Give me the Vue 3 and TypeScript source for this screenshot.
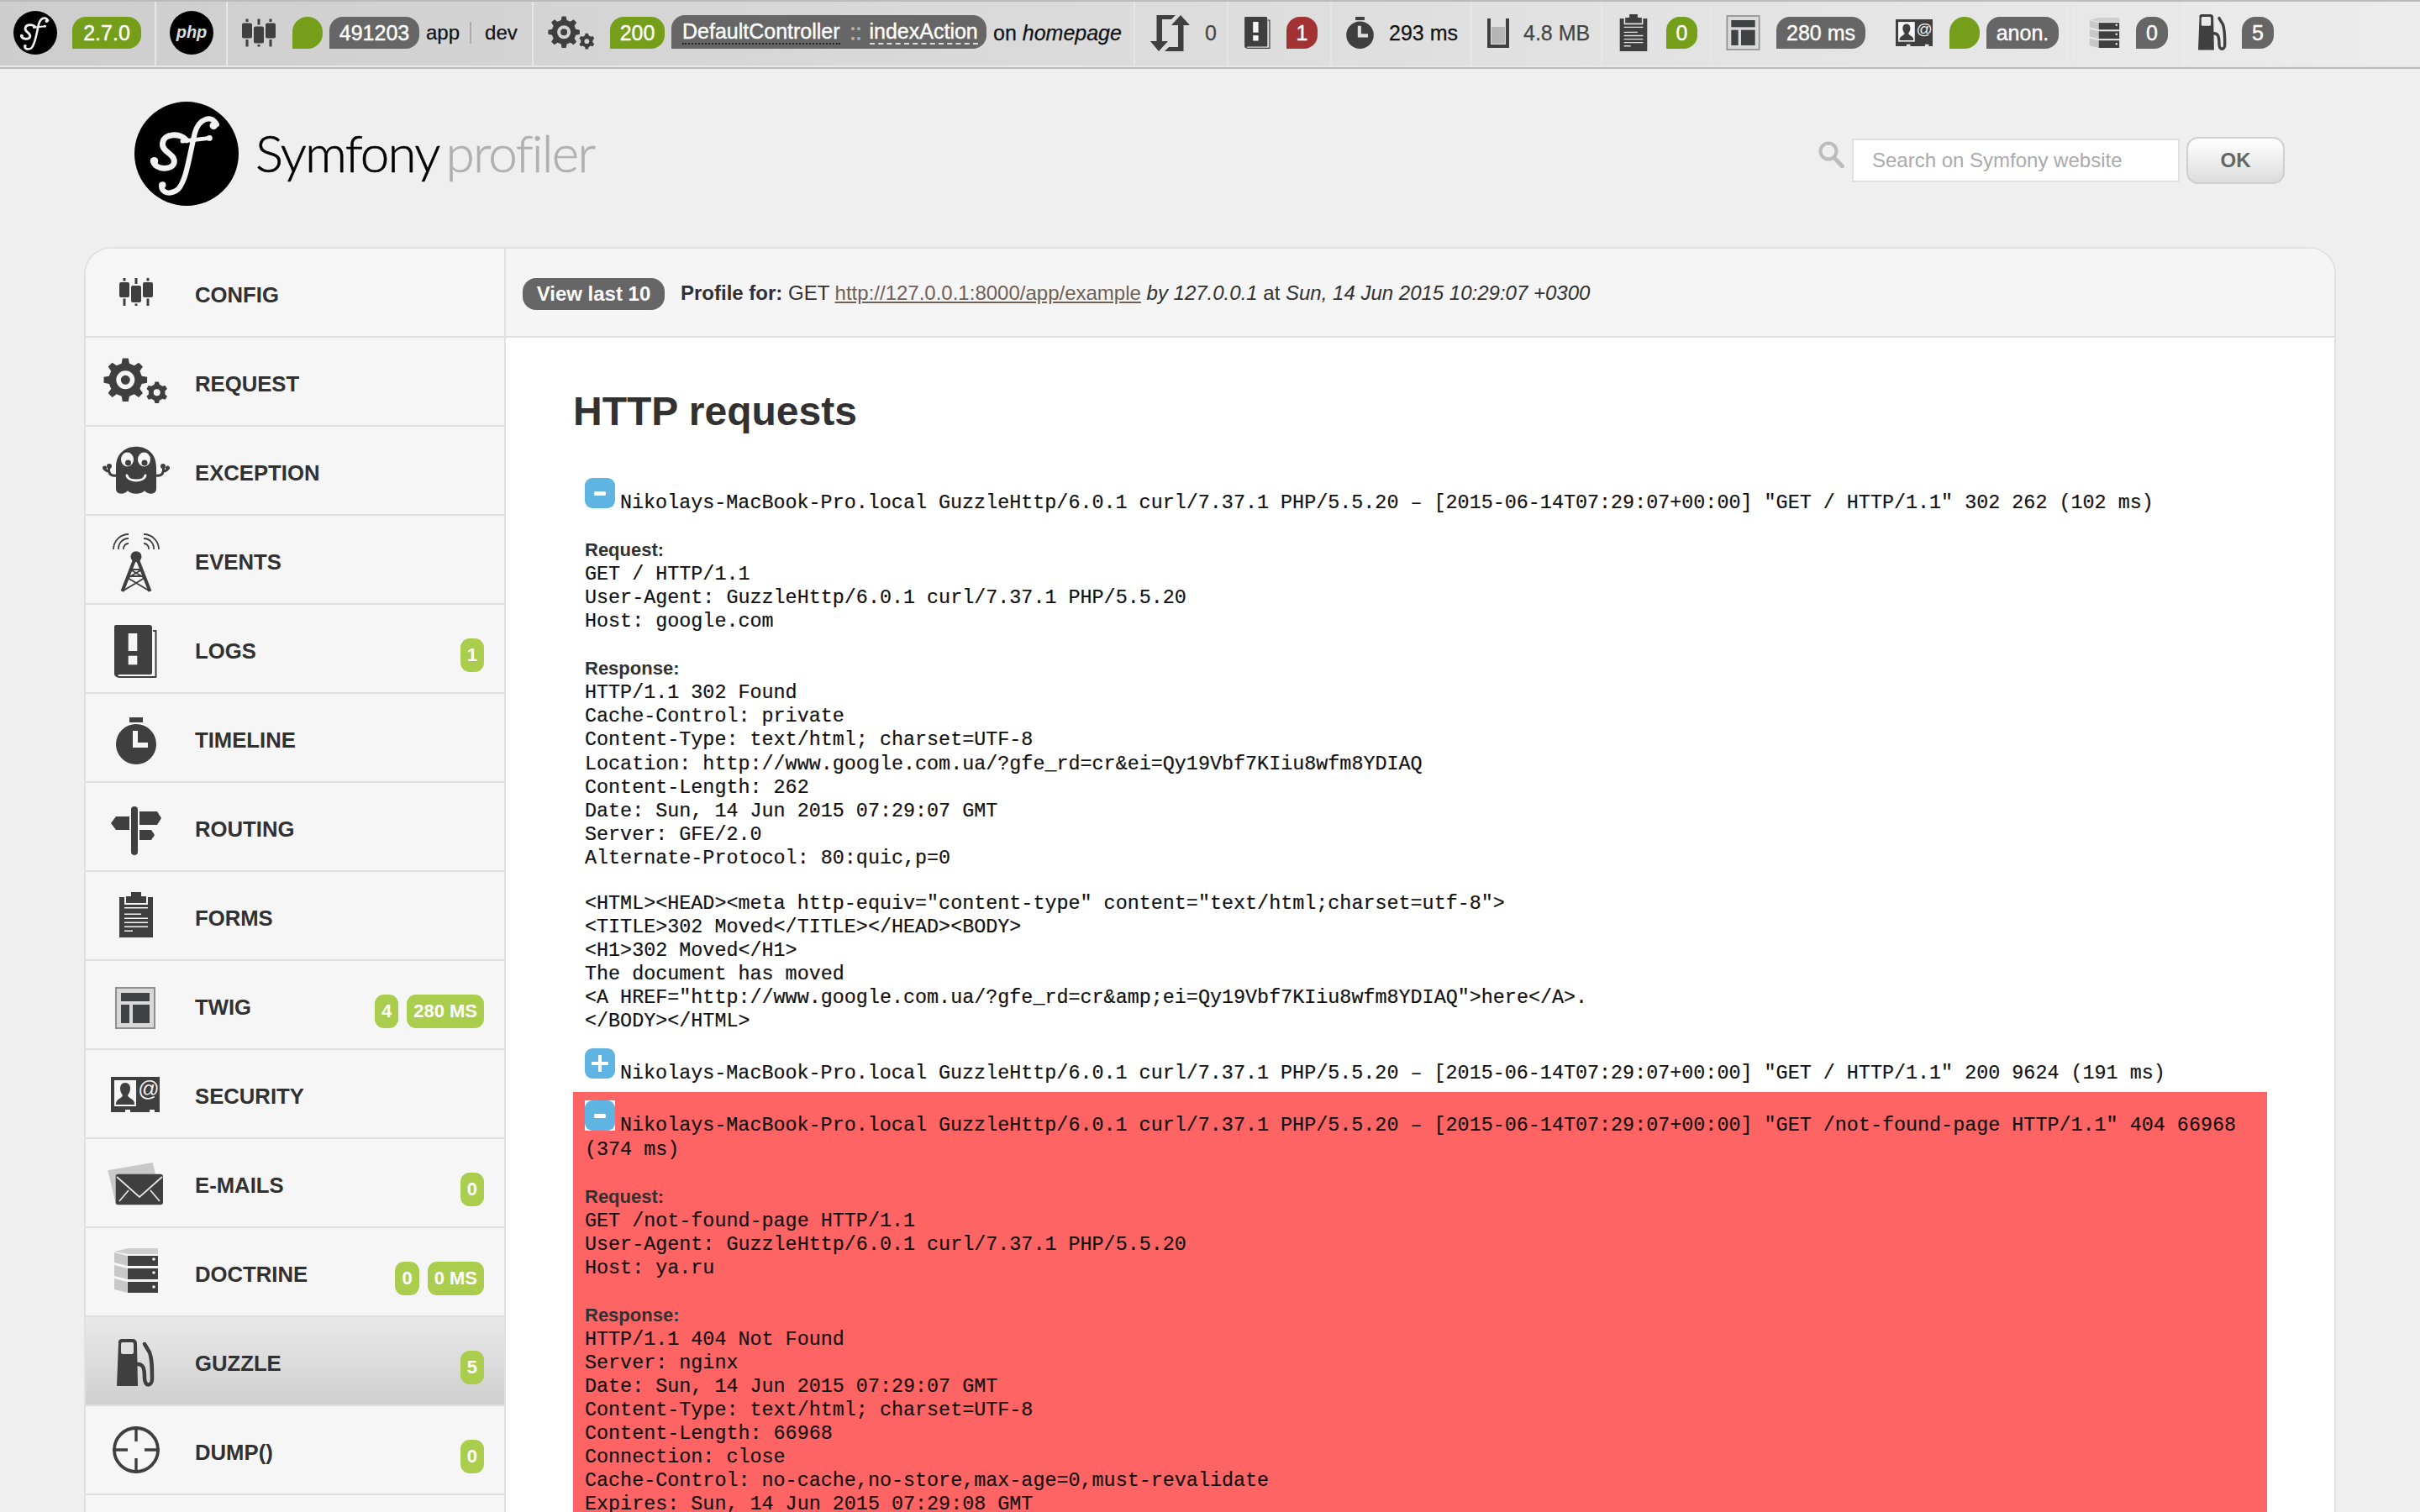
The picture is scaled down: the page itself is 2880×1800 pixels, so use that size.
<script setup lang="ts">
import { h } from 'vue'
import type { FunctionalComponent } from 'vue'

type IconName =
  | 'config' | 'gears' | 'ghost' | 'tower' | 'logs' | 'timer' | 'routing' | 'forms'
  | 'twig' | 'security' | 'mail' | 'doctrine' | 'guzzle' | 'dump' | 'redirect' | 'memory'

const viewBoxes: Record<IconName, [number, number, number, number]> = {
  config: [20, 23, 40, 33],
  gears: [1, 12, 77, 56],
  ghost: [0, 11, 80, 58],
  tower: [12, 10, 56, 70],
  logs: [14, 12, 51, 63],
  timer: [16, 16, 48, 56],
  routing: [10, 16, 60, 58],
  forms: [20, 12, 40, 54],
  twig: [16, 20, 46, 48],
  security: [10, 20, 58, 42],
  mail: [6, 16, 66, 51],
  doctrine: [14, 12, 52, 53],
  guzzle: [17, 14, 45, 58],
  dump: [12, 12, 56, 56],
  redirect: [0, 0, 47, 44],
  memory: [0, 0, 26, 35],
}

const Ic: FunctionalComponent<{ name: IconName; w?: number; hgt?: number }> = (props) => {
  const vb = viewBoxes[props.name]
  const width = props.w ?? 80
  const isBar = props.w !== undefined
  return h(
    'svg',
    {
      width,
      height: isBar ? props.hgt : 80,
      viewBox: isBar ? vb.join(' ') : '0 0 80 80',
      style: { flex: 'none', display: 'block', overflow: 'visible' },
    },
    [h('use', { href: '#i-' + props.name })],
  )
}

function gear(cx: number, cy: number, ro: number, ri: number, teeth: number, hole: number, dot: number): string {
  const pts: string[] = []
  const step = (Math.PI * 2) / teeth
  for (let i = 0; i < teeth; i++) {
    const a = i * step - Math.PI / 2
    const seq: [number, number][] = [
      [ri, a - step * 0.3],
      [ro, a - step * 0.17],
      [ro, a + step * 0.17],
      [ri, a + step * 0.3],
    ]
    for (const [r, t] of seq) {
      pts.push((cx + r * Math.cos(t)).toFixed(2) + ' ' + (cy + r * Math.sin(t)).toFixed(2))
    }
  }
  const ring = (r: number) =>
    `M${cx - r} ${cy}a${r} ${r} 0 1 0 ${2 * r} 0a${r} ${r} 0 1 0 ${-2 * r} 0Z`
  return 'M' + pts.join('L') + 'Z' + ring(hole) + (dot ? ring(dot) : '')
}

const bigGear = gear(27.3, 38.3, 26, 20, 8, 11, 5.5)
const smallGear = gear(64.7, 53.3, 13, 10, 6, 4, 0)

interface MenuItem {
  label: string
  icon: IconName
  badges: string[]
  active?: boolean
}

const menu: MenuItem[] = [
  { label: 'Config', icon: 'config', badges: [] },
  { label: 'Request', icon: 'gears', badges: [] },
  { label: 'Exception', icon: 'ghost', badges: [] },
  { label: 'Events', icon: 'tower', badges: [] },
  { label: 'Logs', icon: 'logs', badges: ['1'] },
  { label: 'Timeline', icon: 'timer', badges: [] },
  { label: 'Routing', icon: 'routing', badges: [] },
  { label: 'Forms', icon: 'forms', badges: [] },
  { label: 'Twig', icon: 'twig', badges: ['4', '280 ms'] },
  { label: 'Security', icon: 'security', badges: [] },
  { label: 'E-mails', icon: 'mail', badges: ['0'] },
  { label: 'Doctrine', icon: 'doctrine', badges: ['0', '0 ms'] },
  { label: 'Guzzle', icon: 'guzzle', badges: ['5'], active: true },
  { label: 'Dump()', icon: 'dump', badges: ['0'] },
  { label: '', icon: 'dump', badges: [] },
]

const agent = 'Nikolays-MacBook-Pro.local GuzzleHttp/6.0.1 curl/7.37.1 PHP/5.5.20 – [2015-06-14T07:29:07+00:00]'

const first = {
  req: 'GET / HTTP/1.1\nUser-Agent: GuzzleHttp/6.0.1 curl/7.37.1 PHP/5.5.20\nHost: google.com',
  res: 'HTTP/1.1 302 Found\nCache-Control: private\nContent-Type: text/html; charset=UTF-8\nLocation: http://www.google.com.ua/?gfe_rd=cr&ei=Qy19Vbf7KIiu8wfm8YDIAQ\nContent-Length: 262\nDate: Sun, 14 Jun 2015 07:29:07 GMT\nServer: GFE/2.0\nAlternate-Protocol: 80:quic,p=0',
  body: '<HTML><HEAD><meta http-equiv="content-type" content="text/html;charset=utf-8">\n<TITLE>302 Moved</TITLE></HEAD><BODY>\n<H1>302 Moved</H1>\nThe document has moved\n<A HREF="http://www.google.com.ua/?gfe_rd=cr&amp;ei=Qy19Vbf7KIiu8wfm8YDIAQ">here</A>.\n</BODY></HTML>',
}
const third = {
  req: 'GET /not-found-page HTTP/1.1\nUser-Agent: GuzzleHttp/6.0.1 curl/7.37.1 PHP/5.5.20\nHost: ya.ru',
  res: 'HTTP/1.1 404 Not Found\nServer: nginx\nDate: Sun, 14 Jun 2015 07:29:07 GMT\nContent-Type: text/html; charset=UTF-8\nContent-Length: 66968\nConnection: close\nCache-Control: no-cache,no-store,max-age=0,must-revalidate\nExpires: Sun, 14 Jun 2015 07:29:08 GMT',
}
</script>

<template>
  <div class="page">
    <svg class="defs" width="0" height="0" aria-hidden="true">
      <defs>
        <g id="sf-mark">
          <circle cx="50" cy="50" r="50" fill="#000" />
          <g fill="none" stroke="#f2f2f2" stroke-linecap="round">
            <path stroke-width="5" d="M79 22C74 12 62 16 58 30 52 55 50 75 42 84 35 90 25 88 26 80" />
            <path stroke-width="5.500" d="M50 37C44 30 28 30 27 40 26 49 40 50 38 59 36 66 20 66 18 57" />
            <path stroke-width="4" d="M46 38 72 35" />
          </g>
          <g fill="#f2f2f2">
            <circle cx="76" cy="23" r="3.800" />
            <circle cx="19" cy="57" r="3.800" />
            <circle cx="27" cy="80" r="3.200" />
            <circle cx="72" cy="35" r="2.800" />
          </g>
        </g>
        <g id="i-config" fill="#3f3f3f">
          <rect x="20" y="28" width="12" height="18" rx="2" />
          <rect x="34" y="32" width="12" height="20" rx="2" />
          <rect x="48" y="28" width="12" height="18" rx="2" />
          <rect x="24.5" y="23" width="3" height="3.5" />
          <rect x="38.5" y="23" width="3" height="7" />
          <rect x="52.5" y="23" width="3" height="3.5" />
          <rect x="24.5" y="47.5" width="3" height="8.5" />
          <rect x="38.5" y="53.5" width="3" height="2.5" />
          <rect x="52.5" y="47.5" width="3" height="8.5" />
        </g>
        <g id="i-gears" fill="#3f3f3f" fill-rule="evenodd">
          <path :d="bigGear" />
          <path :d="smallGear" />
        </g>
        <g id="i-ghost">
          <path fill="#3f3f3f" d="M16 36C16 20 27 11.700 40 11.700S64 20 64 36V62c0 3.500-2.500 5.700-6 5.700-3.500 0-6-1.200-8-3.500-2.300 2.300-5 3.500-10 3.500s-7.700-1.200-10-3.500c-2 2.300-4.500 3.500-8 3.500-3.500 0-6-2.200-6-5.700Z" />
          <ellipse cx="29.500" cy="27" rx="7.500" ry="8.500" fill="#f6f6f6" />
          <ellipse cx="49.500" cy="27" rx="7.500" ry="8.500" fill="#f6f6f6" />
          <circle cx="30.500" cy="31" r="3.500" fill="#3f3f3f" />
          <circle cx="50" cy="31" r="3.500" fill="#3f3f3f" />
          <path d="M29 46c2 8 20 8 22 0" fill="none" stroke="#f6f6f6" stroke-width="3" stroke-linecap="round" />
          <g fill="none" stroke="#3f3f3f" stroke-width="3">
            <path d="M16 46c-5 1-9-1-8.500-9M7.500 41c-2 0-4-1-5-3" />
            <path d="M64 46c5 1 9-1 8.500-9M72.500 41c2 0 4-1 5-3" />
          </g>
          <g fill="#3f3f3f">
            <circle cx="8" cy="35" r="3" />
            <circle cx="2.500" cy="37" r="2.500" />
            <circle cx="72" cy="35" r="3" />
            <circle cx="77.500" cy="37" r="2.500" />
          </g>
        </g>
        <g id="i-tower">
          <circle cx="40" cy="36.700" r="6.500" fill="#3f3f3f" />
          <g fill="none" stroke="#3f3f3f" stroke-width="4">
            <path d="M39 38L23.500 78M41 38L56.500 78" />
          </g>
          <g fill="none" stroke="#3f3f3f" stroke-width="2">
            <path d="M33 52H47M30 60H50M33 52L50 62M47 52L30 62M50 62L25 77M30 62L55 77" />
          </g>
          <g fill="none" stroke="#3f3f3f" stroke-width="1.800">
            <path d="M31 21a6 6 0 0 0-6 7M31 15a12 12 0 0 0-12 13M31 10a18 18 0 0 0-18 18" />
            <path d="M49 21a6 6 0 0 1 6 7M49 15a12 12 0 0 1 12 13M49 10a18 18 0 0 1 18 18" />
          </g>
        </g>
        <g id="i-logs">
          <path fill="#3f3f3f" d="M16 12H56a3 3 0 0 1 3 3v54a2 2 0 0 1-2 2H22c-2.500 0-4 .5-4 1s1.500 1 4 1H62.500V20H60v-2h3.500a1 1 0 0 1 1 1V74a1 1 0 0 1-1 1H22c-5 0-8-2-8-5V14a2 2 0 0 1 2-2Z" />
          <rect x="30.700" y="22" width="10.600" height="21" fill="#f6f6f6" />
          <rect x="30.700" y="48.700" width="10.600" height="10.600" fill="#f6f6f6" />
        </g>
        <g id="i-timer" fill="#3f3f3f">
          <rect x="32" y="16" width="16" height="6" />
          <path d="M40 24a24 24 0 1 0 0 48 24 24 0 0 0 0-48ZM36 32h6v14h12v6H36Z" fill-rule="evenodd" />
        </g>
        <g id="i-routing" fill="#3f3f3f">
          <rect x="34" y="16" width="8" height="58" rx="4" />
          <path d="M32 28V44H16L10 36 16 28Z" />
          <path d="M44 22H65L70 30 65 38H44Z" />
          <path d="M44 44H58L62 50 58 56H44Z" />
        </g>
        <g id="i-forms">
          <path fill="#3f3f3f" fill-rule="evenodd" d="M20 18H26V27H54V18H60V66H20ZM26 30V31.600H54V30ZM26 37.500V39H46V37.500ZM26 42.500V44.100H54V42.500ZM26 47.500V49.100H54V47.500ZM26 52.500V54.100H54V52.500ZM26 57.500V59.100H36V57.500Z" />
          <path fill="#3f3f3f" d="M28 17H34V12H46V17H52V25H28Z" />
        </g>
        <g id="i-twig">
          <rect x="16" y="20" width="46" height="48" fill="#d9d9d9" stroke="#8f8f8f" stroke-width="2" />
          <rect x="22" y="26" width="34" height="10" fill="#3f4242" />
          <rect x="22" y="40" width="10" height="22" fill="#3f4242" />
          <rect x="36" y="40" width="20" height="22" fill="#3f4242" />
        </g>
        <g id="i-security">
          <path fill="#3f3f3f" d="M10 20H68V62H62V59H56V62H33V59H27V62H10Z" />
          <rect x="14" y="24" width="26" height="31" fill="#f6f6f6" />
          <path fill="#3f3f3f" d="M27 27c4 0 6 3 6 7s-2 6-3 8c0 3 8 4 8 10v1H16v-1c0-6 8-7 8-10-1-2-3-4-3-8s2-7 6-7Z" />
          <text x="55" y="43" text-anchor="middle" font-family="Liberation Sans, sans-serif" font-size="25" fill="#f0f0f0">@</text>
        </g>
        <g id="i-mail">
          <path fill="#c9c9c9" d="M6.300 25.300 59.700 16 63 30 16 66Z" />
          <rect x="15.700" y="29.700" width="56.300" height="36.600" rx="3" fill="#3f3f3f" />
          <g fill="none" stroke="#e4e4e4" stroke-width="1.800">
            <path d="M17 33 44 57 71 33" />
            <path d="M20 62 31 49M68 62 57 49" />
          </g>
        </g>
        <g id="i-doctrine">
          <path fill="#cfcfcf" d="M14 16 30 12 66 12V19H30L14 16Z" />
          <path fill="#c8c8c8" d="M14 17 29.700 21V33L14 29ZM14 32 29.700 36V49L14 45ZM14 48 29.700 52V65L14 61Z" />
          <rect x="30" y="21" width="36" height="12" fill="#3f3f3f" />
          <rect x="30" y="36" width="36" height="13" fill="#3f3f3f" />
          <rect x="30" y="52" width="36" height="13" fill="#3f3f3f" />
          <circle cx="61" cy="25" r="1.800" fill="#f0f0f0" />
          <circle cx="61" cy="41" r="1.800" fill="#f0f0f0" />
          <circle cx="61" cy="58" r="1.800" fill="#f0f0f0" />
        </g>
        <g id="i-guzzle">
          <path fill="#3f3f3f" fill-rule="evenodd" d="M22 14H36a5 5 0 0 1 5 5L42 70H17L19 19a4 4 0 0 1 3-5ZM24 18a2 2 0 0 0-2 2V30a2 2 0 0 0 2 2H35a2 2 0 0 0 2-2V20a2 2 0 0 0-2-2Z" />
          <path fill="none" stroke="#3f3f3f" stroke-width="4.500" stroke-linecap="round" d="M42 44C48 44 50 48 50 60 50 72 59 70 59 62 59 48 59 38 56 30L50 20" />
        </g>
        <g id="i-dump" fill="none" stroke="#3f3f3f">
          <circle cx="40" cy="40" r="26" stroke-width="3.800" />
          <path d="M40 12V30M40 50V68M12 40H30M50 40H68" stroke-width="3.400" />
        </g>
        <g id="i-redirect" fill="#3f3f3f">
          <path d="M36 1 47 13H39.500V44H17L22 39H33V13H25Z" />
          <path d="M10 44 0 32H7.500V1H30L25 6H14V32H21Z" />
        </g>
        <g id="i-memory">
          <path fill="#3f3f3f" d="M0 0H4V31H22V0H26V35H0Z" />
          <rect x="5" y="10" width="16" height="20" fill="#b5b5b5" />
        </g>
      </defs>
    </svg>

    <div class="toolbar">
      <div class="tb-inner">
        <div class="blk b-sf">
          <svg class="sf" width="52" height="52" viewBox="0 0 100 100"><use href="#sf-mark" /></svg>
          <span class="bdg green">2.7.0</span>
        </div>
        <div class="blk b-php">
          <div class="php">php</div>
        </div>
        <div class="blk b-config">
          <Ic name="config" :w="40" :hgt="34" />
          <span class="dot"></span>
          <span class="bdg grey w-token">491203</span>
          <span class="txt app">app</span>
          <span class="txt dev">dev</span>
        </div>
        <div class="blk b-request">
          <Ic name="gears" :w="56" :hgt="41" />
          <span class="bdg green w-200">200</span>
          <span class="bdg grey route"><span class="u">DefaultController</span><span class="colons">::</span><span class="u dashed">indexAction</span></span>
          <span class="txt">on <em>homepage</em></span>
        </div>
        <div class="blk b-ajax">
          <Ic name="redirect" :w="47" :hgt="44" />
          <span class="txt soft">0</span>
        </div>
        <div class="blk b-logs">
          <Ic name="logs" :w="31" :hgt="38" />
          <span class="bdg red w-n">1</span>
        </div>
        <div class="blk b-time">
          <Ic name="timer" :w="33" :hgt="38" />
          <span class="txt">293 ms</span>
        </div>
        <div class="blk b-mem">
          <Ic name="memory" :w="26" :hgt="35" />
          <span class="txt soft">4.8 MB</span>
        </div>
        <div class="blk b-forms">
          <Ic name="forms" :w="40" :hgt="44" />
          <span class="bdg green w-n">0</span>
        </div>
        <div class="blk b-twig">
          <Ic name="twig" :w="39" :hgt="40" />
          <span class="bdg grey w-ms">280 ms</span>
        </div>
        <div class="blk b-sec">
          <Ic name="security" :w="44" :hgt="32" />
          <span class="dot"></span>
          <span class="bdg grey w-anon">anon.</span>
        </div>
        <div class="blk b-doc">
          <Ic name="doctrine" :w="41" :hgt="36" />
          <span class="bdg grey w-n2">0</span>
        </div>
        <div class="blk b-guz">
          <Ic name="guzzle" :w="34" :hgt="44" />
          <span class="bdg grey w-n2">5</span>
        </div>
      </div>
    </div>

    <header class="site-head">
      <div class="logo">
        <svg width="124" height="124" viewBox="0 0 100 100"><use href="#sf-mark" /></svg>
        <span class="word">Symfony</span><span class="word pale">profiler</span>
      </div>
      <form class="search" @submit.prevent>
        <svg width="31" height="32" viewBox="0 0 31 32">
          <circle cx="12" cy="12" r="9.500" fill="none" stroke="#bcbcbc" stroke-width="4" />
          <path d="M19 20 28.500 30" stroke="#bcbcbc" stroke-width="5" stroke-linecap="round" />
        </svg>
        <input class="search-input" type="text" placeholder="Search on Symfony website" />
        <button class="ok" type="button">OK</button>
      </form>
    </header>

    <div class="shell">
      <nav class="menu">
        <div v-for="item in menu" :key="item.label" class="row" :class="{ active: item.active }">
          <span class="row-icon"><Ic v-if="item.label" :name="item.icon" /></span>
          <span class="row-label">{{ item.label }}</span>
          <span class="row-badges">
            <span v-for="b in item.badges" :key="b" class="count">{{ b }}</span>
          </span>
        </div>
      </nav>

      <main class="main">
        <div class="bar">
          <span class="last">View last 10</span>
          <span class="meta"><strong>Profile for:</strong> GET <a class="link">http://127.0.0.1:8000/app/example</a> <em>by 127.0.0.1</em> at <em>Sun, 14 Jun 2015 10:29:07 +0300</em></span>
        </div>
        <div class="content">
          <h2 class="title">HTTP requests</h2>

          <section class="entry">
            <div class="mono"><svg class="toggle" width="36" height="36" viewBox="0 0 36 36"><rect width="36" height="36" fill="#fff" /><rect width="36" height="36" rx="9" fill="#5fb4e1" /><rect x="11" y="16" width="14" height="5" rx="1.500" fill="#fff" /></svg>{{ agent }} "GET / HTTP/1.1" 302 262 (102 ms)</div>
            <div class="label gap">Request:</div>
            <pre class="mono">{{ first.req }}</pre>
            <div class="label gap">Response:</div>
            <pre class="mono">{{ first.res }}</pre>
            <pre class="mono body-gap">{{ first.body }}</pre>
          </section>

          <section class="entry">
            <div class="mono"><svg class="toggle" width="36" height="36" viewBox="0 0 36 36"><rect width="36" height="36" fill="#fff" /><rect width="36" height="36" rx="9" fill="#5fb4e1" /><path d="M16 8h4v8h8v4h-8v8h-4v-8H8v-4h8Z" fill="#fff" /></svg>{{ agent }} "GET / HTTP/1.1" 200 9624 (191 ms)</div>
          </section>

          <section class="entry error">
            <div class="mono"><svg class="toggle" width="36" height="36" viewBox="0 0 36 36"><rect width="36" height="36" fill="#fff" /><rect width="36" height="36" rx="9" fill="#5fb4e1" /><rect x="11" y="16" width="14" height="5" rx="1.500" fill="#fff" /></svg>{{ agent }} "GET /not-found-page HTTP/1.1" 404 66968 (374 ms)</div>
            <div class="label gap">Request:</div>
            <pre class="mono">{{ third.req }}</pre>
            <div class="label gap">Response:</div>
            <pre class="mono">{{ third.res }}</pre>
          </section>
        </div>
      </main>
    </div>
  </div>
</template>

<style>
html, body { margin: 0; background: #efefef; }
</style>

<style scoped>
.page {
  height: 1800px;
  overflow: hidden;
  background: #efefef;
  font-family: "Liberation Sans", Arial, sans-serif;
  color: #313131;
}
.defs { position: absolute; }

.toolbar {
  height: 82px;
  box-sizing: border-box;
  border-top: 2px solid #bbb;
  border-bottom: 2px solid #bbb;
  background: linear-gradient(to right, #cdcdcd, #ececec);
}
.tb-inner { display: flex; height: 76px; border-bottom: 2px solid #e8e8e8; }
.blk {
  box-sizing: border-box;
  height: 76px;
  padding-bottom: 2px;
  display: flex;
  align-items: center;
  border-right: 2px solid #e6e6e6;
  flex: none;
}
.blk:last-child { border-right-color: #ececec; }
.b-sf { width: 186px; padding-left: 16px; gap: 18px; }
.b-php { width: 85px; padding-left: 16px; }
.b-config { width: 364px; padding-left: 17px; gap: 8px; }
.b-config .dot { margin-left: 12px; }
.b-request { width: 716px; padding-left: 17px; gap: 8px; }
.b-request .w-200 { margin-left: 10px; }
.b-ajax { width: 111px; padding-left: 18px; gap: 18px; }
.b-logs { width: 123px; padding-left: 19px; gap: 19px; }
.b-time { width: 167px; padding-left: 17px; gap: 18px; }
.b-mem { width: 155px; padding-left: 18px; gap: 17px; }
.b-forms { width: 129px; padding-left: 17px; gap: 19px; }
.b-twig { width: 200px; padding-left: 19px; gap: 20px; }
.b-sec { width: 229px; padding-left: 20px; gap: 8px; }
.b-sec .dot { margin-left: 12px; }
.b-doc { width: 130px; padding-left: 19px; gap: 17px; }
.b-guz { width: 128px; padding-left: 21px; gap: 18px; }

.php {
  width: 52px;
  height: 52px;
  border-radius: 50%;
  background: #000;
  color: #ddd;
  font-size: 20px;
  font-style: italic;
  font-weight: 700;
  line-height: 50px;
  text-align: center;
}
.bdg {
  box-sizing: border-box;
  height: 38px;
  display: flex;
  align-items: center;
  justify-content: center;
  flex: none;
  border-radius: 16px 16px 16px 0;
  color: #fff;
  font-size: 25px;
  -webkit-text-stroke: 0.4px #fff;
}
.green { background: #759e1a; width: 82px; }
.grey { background: #666; }
.red { background: #a33333; }
.dot { width: 36px; height: 38px; border-radius: 18px 18px 18px 0; background: #759e1a; flex: none; }
.w-token { width: 107px; }
.w-200 { width: 65px; }
.w-n { width: 37px; }
.w-n2 { width: 38px; }
.w-ms { width: 106px; }
.w-anon { width: 86px; }
.route { width: 375px; height: 40px; margin-top: -2px; justify-content: flex-start; padding-left: 13px; }
.u { border-bottom: 2px dotted #222; line-height: 28px; }
.dashed { border-bottom: 2px dashed #ddd; }
.colons { color: #999; margin: 0 9px 0 12px; }
.txt { font-size: 25px; color: #111; white-space: nowrap; -webkit-text-stroke: 0.25px currentColor; }
.soft { color: #444; }
.app { padding-right: 12px; border-right: 2px solid #aaa; line-height: 26px; font-size: 24px; }
.dev { margin-left: 8px; font-size: 24px; }

.site-head {
  height: 212px;
  box-sizing: border-box;
  padding: 0 161px 0 160px;
  display: flex;
  align-items: center;
  justify-content: space-between;
}
.logo { display: flex; align-items: center; margin-top: -10px; }
.logo svg { margin-right: 20px; }
.word {
  font-family: Lato, "Open Sans", sans-serif;
  font-weight: 300;
  font-size: 62px;
  letter-spacing: -1.8px;
  color: #000;
  margin-right: 8px;
  margin-top: -4px;
  -webkit-text-stroke: 0.6px currentColor;
}
.pale { color: #b0b0b0; margin-right: 0; }
.search { display: flex; align-items: center; gap: 8px; margin-top: 6px; }
.search svg { margin-right: 1px; margin-top: -14px; }
.search-input {
  box-sizing: border-box;
  width: 390px;
  height: 52px;
  border: 2px solid #e0e0e0;
  background: #fff;
  padding: 0 22px;
  font-family: inherit;
  font-size: 24px;
  outline: none;
}
.search-input::placeholder { color: #aaa; opacity: 1; }
.ok {
  width: 117px;
  height: 56px;
  border: 2px solid #cfcfcf;
  border-radius: 14px;
  background: linear-gradient(#ffffff, #dcdcdc);
  color: #666;
  font-family: inherit;
  font-size: 24px;
  font-weight: 700;
}

.shell {
  margin: 0 100px;
  border: 2px solid #e0e0e0;
  border-bottom: 0;
  border-radius: 32px 32px 0 0;
  display: flex;
  overflow: hidden;
  background: #fff;
}
.menu {
  width: 500px;
  box-sizing: border-box;
  flex: none;
  background: #f6f6f6;
  border-right: 2px solid #e0e0e0;
}
.row {
  height: 106px;
  box-sizing: border-box;
  border-bottom: 2px solid #e0e0e0;
  display: flex;
  align-items: center;
}
.row.active { background: linear-gradient(#e9e9e9, #cfcfcf); }
.row-icon { width: 120px; display: flex; justify-content: center; flex: none; }
.row-label {
  margin-left: 10px;
  text-transform: uppercase;
  font-weight: 700;
  font-size: 25.7px;
  color: #313131;
  padding-top: 6px;
}
.row-badges { margin-left: auto; margin-right: 24px; display: flex; gap: 10px; padding-top: 16px; }
.count {
  height: 40px;
  min-width: 12px;
  padding: 0 8px;
  border-radius: 11px;
  background: #aacd4e;
  color: #fff;
  font-size: 22px;
  font-weight: 700;
  line-height: 40px;
  text-align: center;
  text-transform: uppercase;
}

.main { flex: 1; min-width: 0; background: #fff; }
.bar {
  height: 106px;
  box-sizing: border-box;
  border-bottom: 2px solid #e0e0e0;
  background: #f5f5f5;
  padding-left: 20px;
  display: flex;
  align-items: center;
  gap: 19px;
}
.last {
  height: 38px;
  width: 169px;
  border-radius: 16px;
  background: #666;
  color: #fff;
  font-size: 24px;
  font-weight: 700;
  line-height: 37px;
  text-align: center;
  margin-top: 4px;
}
.meta { font-size: 24px; color: #313131; white-space: nowrap; margin-top: 2px; }
.link { color: #6f5f55; text-decoration: underline; }
.content { padding: 58px 80px 0; }
.title {
  margin: 0 0 39px 0;
  font-size: 48px;
  line-height: 60px;
  font-weight: 700;
  color: #313131;
}
.entry { padding: 10px 14px 8px; }
.error { background: #ff6464; padding-bottom: 40px; }
.mono {
  margin: 0;
  font-family: "Liberation Mono", "Courier New", monospace;
  font-size: 23.4px;
  line-height: 28.08px;
  color: #111;
  -webkit-text-stroke: 0.2px #111;
}
pre.mono { white-space: pre-wrap; }
.toggle { display: inline-block; vertical-align: baseline; margin-right: 6px; }
.label { font-size: 22px; font-weight: 700; line-height: 27px; padding-bottom: 2px; color: #313131; }
.gap { margin-top: 28px; }
.body-gap { margin-top: 26px; }
</style>
